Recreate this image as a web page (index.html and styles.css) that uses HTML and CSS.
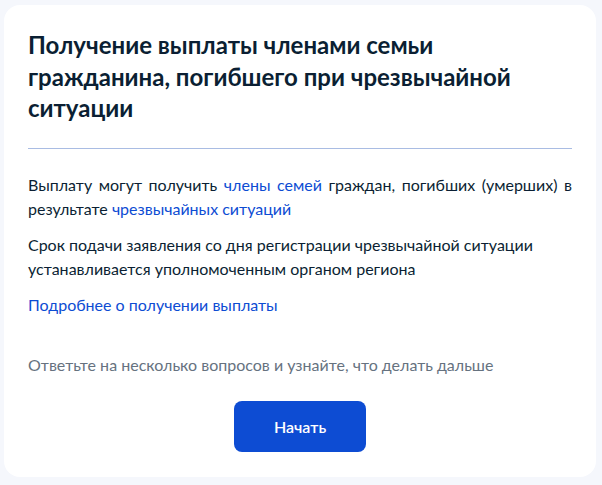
FILE: index.html
```html
<!DOCTYPE html>
<html lang="ru">
<head>
<meta charset="utf-8">
<title>Получение выплаты</title>
<link rel="stylesheet" href="styles.css">
</head>
<body>
<main class="card">
  <h1 class="title">Получение выплаты членами семьи гражданина, погибшего при чрезвычайной ситуации</h1>
  <hr class="divider">
  <p class="text text-justify">Выплату могут получить <a href="#" class="link">члены семей</a> граждан, погибших (умерших) в результате <a href="#" class="link">чрезвычайных ситуаций</a></p>
  <p class="text">Срок подачи заявления со дня регистрации чрезвычайной ситуации устанавливается уполномоченным органом региона</p>
  <p class="text"><a href="#" class="link">Подробнее о получении выплаты</a></p>
  <p class="hint">Ответьте на несколько вопросов и узнайте, что делать дальше</p>
  <div class="actions">
    <button class="btn" type="button">Начать</button>
  </div>
</main>
</body>
</html>
```

FILE: styles.css
```css
html, body {
  margin: 0;
  padding: 0;
  background: #f5f7fc;
}
body {
  padding: 5px 6px 8px 4px;
  font-family: Lato, "Noto Sans", sans-serif;
  color: #0b1f33;
}
.card {
  background: #ffffff;
  border-radius: 16px;
  padding: 24px 24px 24px 24px;
  height: 472px;
  box-sizing: border-box;
}
.title {
  margin: 0;
  font-size: 24px;
  line-height: 31.5px;
  font-weight: 700;
  color: #0b1f33;
}
.divider {
  border: 0;
  height: 1px;
  background: #a9bce3;
  margin: 24px 0 24px 0;
}
.text {
  margin: 0 0 12px 0;
  font-size: 16px;
  line-height: 24px;
}
.text-justify {
  text-align: justify;
}
.link {
  color: #0d4cd3;
  text-decoration: none;
}
.hint {
  margin: 36px 0 24px 0;
  font-size: 16px;
  line-height: 24px;
  color: #66727f;
}
.actions {
  display: flex;
  justify-content: center;
}
.btn {
  width: 132px;
  height: 51px;
  border: 0;
  border-radius: 8px;
  background: #0d4cd3;
  color: #ffffff;
  font-family: Lato, "Noto Sans", sans-serif;
  font-size: 16px;
  font-weight: 600;
}
```
